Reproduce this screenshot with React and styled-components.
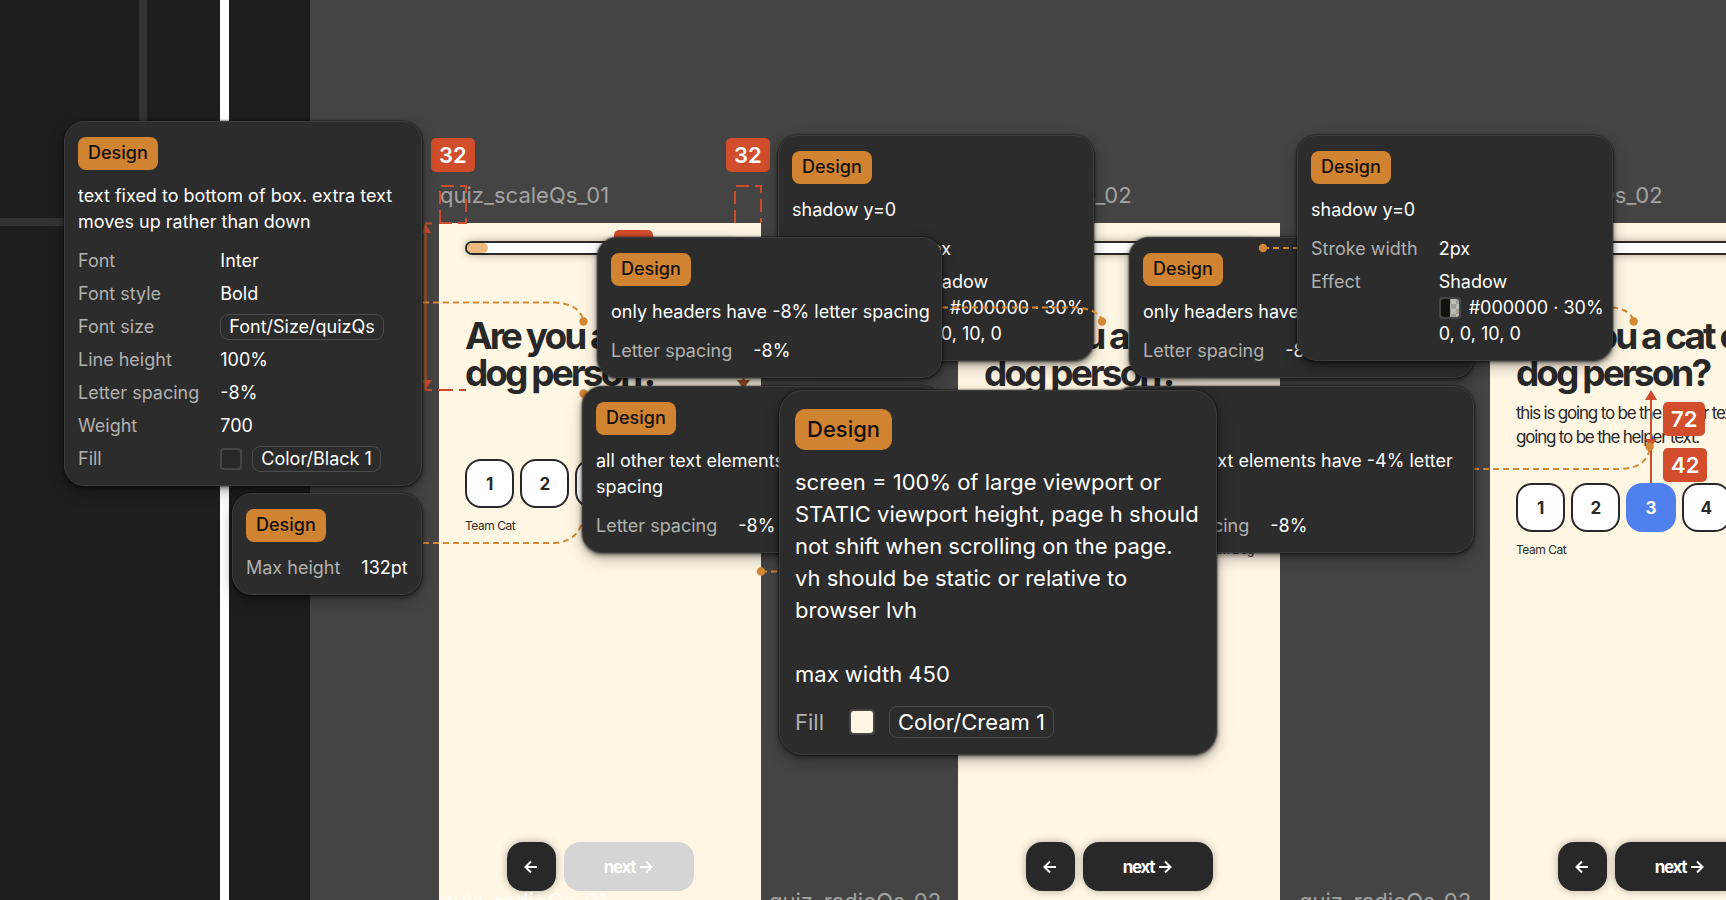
import React from 'react';
import styled, { createGlobalStyle } from 'styled-components';

const GlobalStyle = createGlobalStyle`
  * {
    box-sizing: border-box;
  }

  body {
    margin: 0;
    background: #444;
    font-family: Inter, "Liberation Sans", sans-serif;
  }
`;

const Canvas = styled.main`
  position: relative;
  height: 100vh;
  overflow: hidden;
`;

const DarkBoard = styled.div`
  position: absolute;
  top: 0;
  bottom: 0;
  left: 0;
  width: 310px;
  background: #1e1e1e;
`;

const Rule = styled.div`
  position: absolute;
  left: ${(p) => p.$x}px;
  top: ${(p) => p.$y}px;
  width: ${(p) => p.$w};
  height: ${(p) => p.$h};
  background: ${(p) => p.$color};
`;

const FrameName = styled.h2`
  position: absolute;
  left: ${(p) => p.$x}px;
  top: ${(p) => p.$y}px;
  margin: 0;
  color: ${(p) => p.$color || '#a3a3a1'};
  font-size: 22px;
  font-weight: 400;
  line-height: 28px;
  white-space: nowrap;
`;

const Screen = styled.section`
  position: absolute;
  left: ${(p) => p.$x}px;
  top: 223px;
  bottom: 0;
  width: 322px;
  padding: 18px 26px 9px;
  display: flex;
  flex-direction: column;
  background: #fff6e3;
  color: #282828;
`;

const Track = styled.div`
  height: 14px;
  flex: none;
  border: 2px solid #282828;
  border-radius: 7px;
  background: #fff;
  box-shadow: 0 0 10px rgba(0, 0, 0, 0.3);
`;

const Progress = styled.div`
  width: ${(p) => p.$value}%;
  height: 100%;
  border-radius: 5px;
  background: #edb97e;
`;

const Question = styled.h1`
  height: 109px;
  margin: 27px 0 0;
  display: flex;
  align-items: flex-end;
  font-size: 37px;
  font-weight: 700;
  line-height: 37px;
  letter-spacing: -0.08em;
`;

const Helper = styled.p`
  margin: 10px 0 0;
  font-size: 17px;
  line-height: 24px;
  letter-spacing: -0.07em;
`;

const Scale = styled.div`
  margin-top: ${(p) => p.$top}px;
  display: flex;
  gap: 6px;
`;

const ScaleButton = styled.button`
  flex: 1;
  height: 49px;
  padding: 0;
  border: 2px solid ${(p) => (p.$active ? '#5080ee' : '#282828')};
  border-radius: 16px;
  background: ${(p) => (p.$active ? '#5080ee' : '#fff')};
  color: ${(p) => (p.$active ? '#fff' : '#282828')};
  font: 700 17px Inter, sans-serif;
`;

const Teams = styled.div`
  margin-top: 10px;
  display: flex;
  justify-content: space-between;
  font-size: 12px;
  line-height: 16px;
  letter-spacing: -0.04em;
`;

const Nav = styled.nav`
  margin-top: auto;
  display: flex;
  justify-content: center;
  gap: 8px;
`;

const NavButton = styled.button`
  width: ${(p) => (p.$wide ? 130 : 49)}px;
  height: 49px;
  padding: 0;
  display: flex;
  align-items: center;
  justify-content: center;
  gap: 4px;
  border: 0;
  border-radius: 16px;
  background: #282828;
  box-shadow: 0 0 8px rgba(0, 0, 0, 0.3);
  color: #fff;
  font: 700 17px Inter, sans-serif;
  letter-spacing: -0.08em;

  &:disabled {
    background: #d5d5d5;
    box-shadow: none;
  }
`;

const Drawing = styled.svg`
  position: absolute;
  top: 0;
  left: 0;
  width: 100%;
  height: 100%;
  pointer-events: none;
`;

const Measure = styled.span`
  position: absolute;
  left: ${(p) => p.$x}px;
  top: ${(p) => p.$y}px;
  height: 34px;
  padding: 0 8px;
  border-radius: 5px;
  background: #d14d2c;
  color: #fff;
  font-size: 22px;
  font-weight: 600;
  line-height: 34px;
`;

const Card = styled.article`
  position: absolute;
  left: ${(p) => p.$x}px;
  top: ${(p) => p.$y}px;
  width: ${(p) => p.$w}px;
  padding: ${(p) => (p.$large ? '18px 14px 16px 15px' : '15px 8px 13px 13px')};
  display: flex;
  flex-direction: column;
  align-items: flex-start;
  gap: ${(p) => (p.$large ? 16 : 13)}px;
  border: 1px solid #3d3d3d;
  border-radius: ${(p) => (p.$large ? 24 : 20)}px;
  background: #2c2c2c;
  box-shadow: 0 0 1px 1px rgba(0, 0, 0, 0.25), 0 2px 5px rgba(0, 0, 0, 0.5),
    0 6px 16px rgba(0, 0, 0, 0.25);
  color: #fff;
  font-size: ${(p) => (p.$large ? 22 : 18)}px;
  line-height: ${(p) => (p.$large ? 32 : 26)}px;
`;

const Tag = styled.span`
  padding: ${(p) => (p.$large ? '4px 12px 5px' : '3px 10px 4px')};
  border-radius: ${(p) => (p.$large ? 10 : 8)}px;
  background: #d08331;
  color: #14110c;
  font-weight: 500;
`;

const Note = styled.p`
  margin: 0;
  white-space: pre-line;
`;

const Props = styled.dl`
  margin: 0;
  display: grid;
  grid-template-columns: auto auto;
  column-gap: ${(p) => (p.$large ? 25 : 21)}px;
  row-gap: 7px;
  white-space: nowrap;

  dt {
    color: #b1b1af;
  }

  dd {
    margin: 0;
  }
`;

const Value = styled.div`
  height: ${(p) => (p.$large ? 32 : 26)}px;
  display: flex;
  align-items: center;
  gap: ${(p) => (p.$large ? 14 : p.$tight ? 8 : 10)}px;
`;

const Swatch = styled.span`
  width: ${(p) => (p.$large ? 26 : 22)}px;
  height: ${(p) => (p.$large ? 26 : 22)}px;
  border: 2px solid #454545;
  border-radius: 4px;
  background: ${(p) => p.$fill};
  background-clip: padding-box;
`;

const Token = styled.span`
  padding: 0 8px;
  border: 1px solid #4c4c4c;
  border-radius: 8px;
  line-height: ${(p) => (p.$large ? 30 : 24)}px;
`;

const halfShade =
  'linear-gradient(90deg, #14120e 50%, transparent 50%), repeating-conic-gradient(#a09f9c 0 25%, #bcbcb6 0 50%) 0 0 / 10px 10px';

const Arrow = ({ back }) => (
  <svg width="14" height="14" viewBox="0 0 14 14" fill="none" stroke="currentColor" strokeWidth="2">
    <path d={back ? 'M13 7H2M7 1.5 1.5 7 7 12.5' : 'M1 7h11M7 1.5 12.5 7 7 12.5'} />
  </svg>
);

const QuizScreen = ({ x, helper, active, progress, disabled }) => (
  <Screen $x={x}>
    <Track>
      <Progress $value={progress} />
    </Track>
    <Question>Are you a cat or dog person?</Question>
    {helper && (
      <Helper>this is going to be the helper text. this is going to be the helper text.</Helper>
    )}
    <Scale $top={helper ? 34 : 68}>
      {[1, 2, 3, 4, 5].map((n) => (
        <ScaleButton key={n} type="button" $active={n === active}>
          {n}
        </ScaleButton>
      ))}
    </Scale>
    <Teams>
      <span>Team Cat</span>
      <span>Team Dog</span>
    </Teams>
    <Nav>
      <NavButton type="button" aria-label="back">
        <Arrow back />
      </NavButton>
      <NavButton type="button" $wide disabled={disabled}>
        next
        <Arrow />
      </NavButton>
    </Nav>
  </Screen>
);

const DesignCard = ({ x, y, w, large, note, children }) => (
  <Card $x={x} $y={y} $w={w} $large={large}>
    <Tag $large={large}>Design</Tag>
    {note && <Note>{note}</Note>}
    <Props $large={large}>{children}</Props>
  </Card>
);

const ShadowCard = ({ x }) => (
  <DesignCard x={x} y={135} w={316} note="shadow y=0">
    <dt>Stroke width</dt>
    <dd>2px</dd>
    <dt>Effect</dt>
    <dd>
      Shadow
      <Value $tight>
        <Swatch $fill={halfShade} />
        #000000 · 30%
      </Value>
      0, 0, 10, 0
    </dd>
  </DesignCard>
);

const HeaderCard = ({ x }) => (
  <DesignCard x={x} y={237} w={345} note="only headers have -8% letter spacing">
    <dt>Letter spacing</dt>
    <dd>-8%</dd>
  </DesignCard>
);

const TextCard = ({ x }) => (
  <DesignCard x={x} y={386} w={360} note="all other text elements have -4% letter spacing">
    <dt>Letter spacing</dt>
    <dd>-8%</dd>
  </DesignCard>
);

const Connector = ({ d, cx, cy }) => (
  <g>
    <path d={d} fill="none" stroke="#d58734" strokeWidth="2" strokeDasharray="6 4" />
    <circle cx={cx} cy={cy} r="4.2" fill="#d58734" />
  </g>
);

const Redlines = () => (
  <g fill="none" stroke="#cf4d2c" strokeWidth="2">
    <path d="M440 223V186H466V223ZM735 223V186H761V223" strokeDasharray="13 6" />
    <path d="M425 390h41" strokeDasharray="7 6 15 6" />
    <path d="M425 223.5h7" />
    <path d="M425.5 224v166" stroke="#9b5228" strokeWidth="2.6" />
    <path d="M425 223l6 10h-6ZM425 390l7-10h-7Z" fill="#cf4d2c" stroke="none" />
    <path d="M425 223l-2 10h2ZM425 390l-2-10h2ZM737 380h13l-5 7h-3Z" fill="#9b5228" stroke="none" />
    <path d="M743.7 370v12" stroke="#9b5228" />
    <path d="M1651 392v91" />
    <path d="M1651 390l6 10h-12ZM1645 439h12l-6 8Z" fill="#cf4d2c" stroke="none" />
  </g>
);

const App = () => (
  <>
    <GlobalStyle />
    <Canvas>
      <DarkBoard />
      <Rule $x={139} $y={0} $w="8px" $h="226px" $color="#333" />
      <Rule $x={0} $y={218} $w="147px" $h="8px" $color="#333" />
      <Rule $x={220} $y={0} $w="9px" $h="100%" $color="#fff" />

      <FrameName $x={440} $y={181}>quiz_scaleQs_01</FrameName>
      <FrameName $x={958} $y={181}>quiz_scaleQs_02</FrameName>
      <FrameName $x={1489} $y={181}>quiz_scaleQs_02</FrameName>
      <QuizScreen x={439} progress={8} disabled />
      <QuizScreen x={958} progress={16} helper active={3} />
      <QuizScreen x={1490} progress={24} helper active={3} />
      <FrameName $x={440} $y={887} $color="#fffdf8">quiz_radioQs_01</FrameName>
      <FrameName $x={769} $y={887}>quiz_radioQs_02</FrameName>
      <FrameName $x={1299} $y={887}>quiz_radioQs_03</FrameName>

      <Drawing>
        <Redlines />
        <Connector d="M423 302.5H555Q580 304 583.5 321" cx={583.5} cy={321.5} />
        <Connector d="M423 543H555Q580 541 583.5 516V394" cx={583.5} cy={393.5} />
        <Connector d="M761 571.5H780" cx={761} cy={571.5} />
        <Connector d="M1612 307.5Q1630 309 1633.7 321" cx={1633.7} cy={321.5} />
        <Connector d="M1473 469H1620Q1648 468 1649.7 447" cx={1649.7} cy={446.7} />
      </Drawing>
      <Measure $x={431} $y={138}>32</Measure>
      <Measure $x={726} $y={138}>32</Measure>
      <Measure $x={614} $y={230}>18</Measure>
      <Measure $x={1663} $y={402}>72</Measure>
      <Measure $x={1663} $y={448}>42</Measure>

      <DesignCard
        x={64}
        y={121}
        w={358}
        note="text fixed to bottom of box. extra text moves up rather than down"
      >
        <dt>Font</dt>
        <dd>Inter</dd>
        <dt>Font style</dt>
        <dd>Bold</dd>
        <dt>Font size</dt>
        <dd>
          <Value>
            <Token>Font/Size/quizQs</Token>
          </Value>
        </dd>
        <dt>Line height</dt>
        <dd>100%</dd>
        <dt>Letter spacing</dt>
        <dd>-8%</dd>
        <dt>Weight</dt>
        <dd>700</dd>
        <dt>Fill</dt>
        <dd>
          <Value>
            <Swatch $fill="#282828" />
            <Token>Color/Black 1</Token>
          </Value>
        </dd>
      </DesignCard>
      <DesignCard x={232} y={493} w={190}>
        <dt>Max height</dt>
        <dd>132pt</dd>
      </DesignCard>

      <ShadowCard x={778} />
      <Drawing>
        <Connector d="M942 307.5H1075Q1099 309 1102 321" cx={1102} cy={321.5} />
      </Drawing>
      <HeaderCard x={597} />
      <TextCard x={582} />
      <HeaderCard x={1129} />
      <TextCard x={1114} />
      <Drawing>
        <Connector d="M1263 248H1300" cx={1263} cy={248} />
      </Drawing>
      <ShadowCard x={1297} />
      <DesignCard
        x={779}
        y={390}
        w={438}
        large
        note={
          'screen = 100% of large viewport or STATIC viewport height, page h should not shift when scrolling on the page. vh should be static or relative to browser lvh\n\nmax width 450'
        }
      >
        <dt>Fill</dt>
        <dd>
          <Value $large>
            <Swatch $large $fill="#fff6e3" />
            <Token $large>Color/Cream 1</Token>
          </Value>
        </dd>
      </DesignCard>
    </Canvas>
  </>
);

export default App;
